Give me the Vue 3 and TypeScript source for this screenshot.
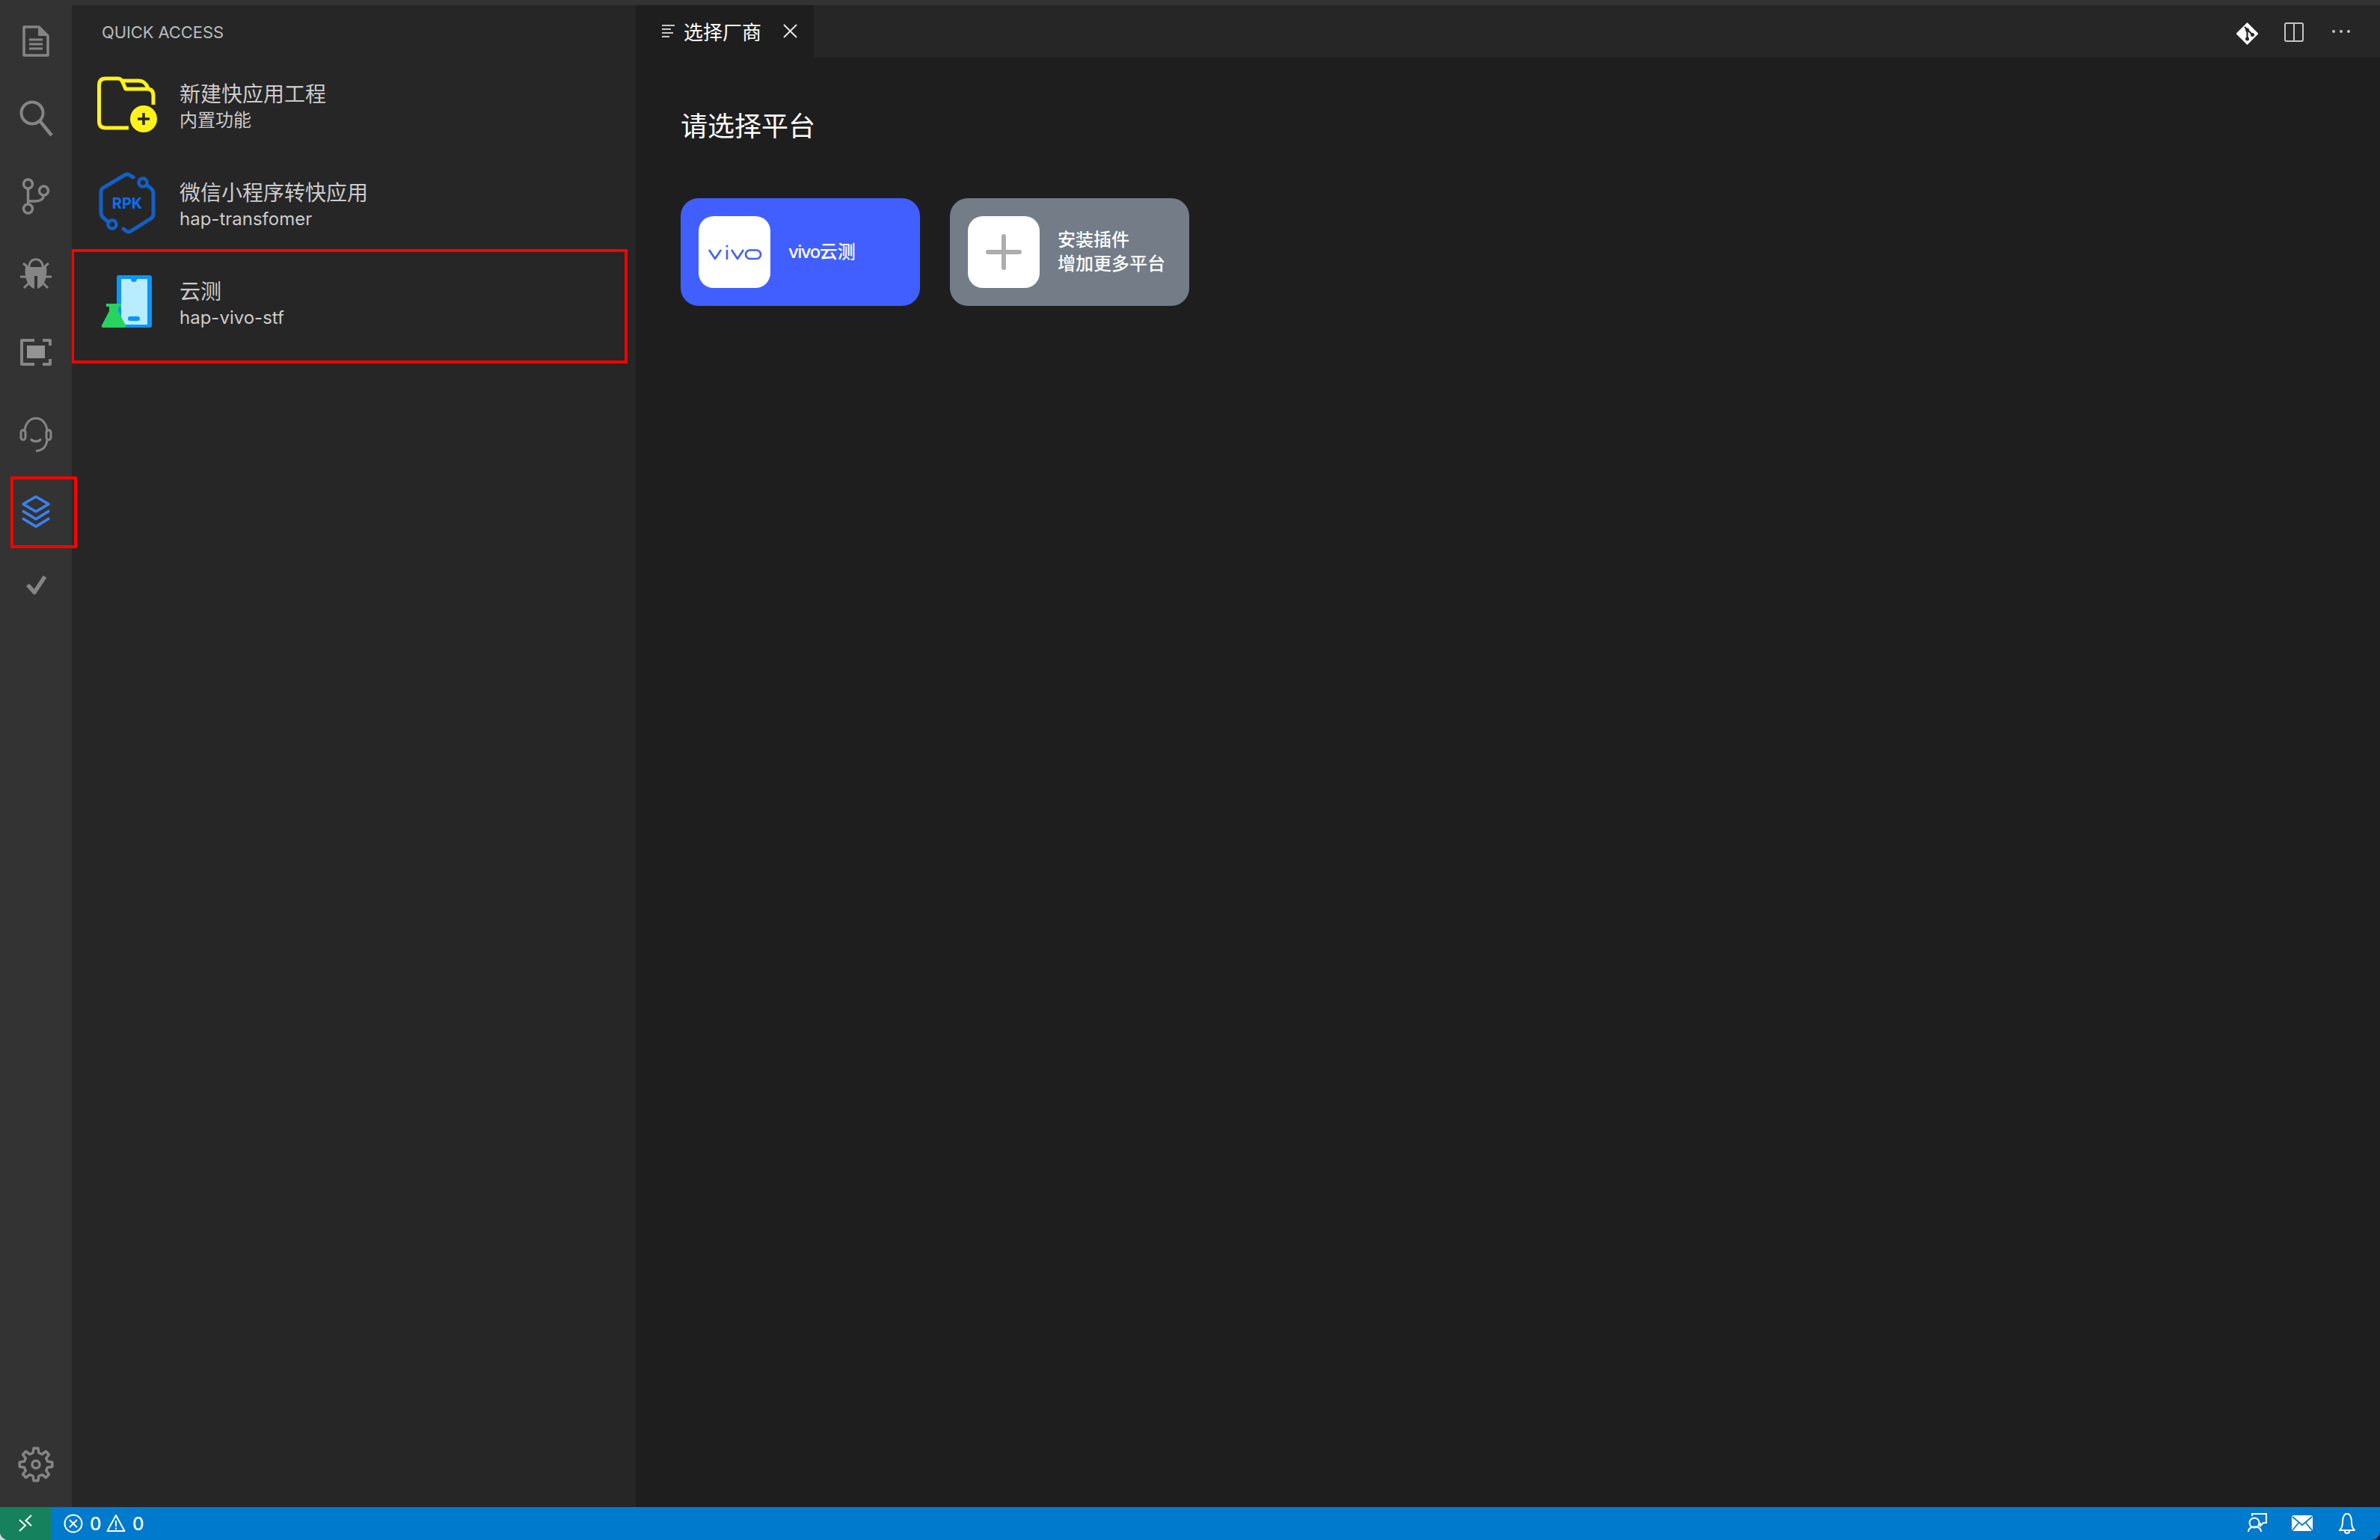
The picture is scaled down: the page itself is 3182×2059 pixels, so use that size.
<script setup lang="ts">
function gearPath(cx: number, cy: number): string {
  const teeth = 8
  const outer = 22
  const inner = 16
  const parts: string[] = []
  for (let i = 0; i < teeth; i++) {
    const a = (i * Math.PI * 2) / teeth - Math.PI / 2
    const step = Math.PI / teeth
    const pts: [number, number][] = [
      [inner, a - step * 0.62],
      [outer, a - step * 0.34],
      [outer, a + step * 0.34],
      [inner, a + step * 0.62],
    ]
    for (const [r, t] of pts) {
      parts.push(`${(cx + r * Math.cos(t)).toFixed(1)} ${(cy + r * Math.sin(t)).toFixed(1)}`)
    }
  }
  return 'M' + parts.join(' L') + ' Z'
}
const gear = gearPath(48, 1958)
</script>

<template>
  <div class="window">
    <div class="titlebar"></div>
    <div class="main">
      <nav class="activity">
        <div class="cell">
          <svg viewBox="0 7 96 104" class="act" fill="none" stroke="#858585" stroke-width="3.5">
            <path d="M32 36 H52 L64 48 V74 H32 Z" stroke-linejoin="round" />
            <path d="M51 35 L65 48 H51 Z" fill="#858585" stroke="none" />
            <path d="M39 53 H57 M39 59 H57 M39 65 H57" stroke-width="3" />
          </svg>
        </div>
        <div class="cell">
          <svg viewBox="0 111 96 104" class="act" fill="none" stroke="#858585" stroke-width="4">
            <circle cx="43" cy="151" r="14.5" />
            <path d="M53.5 162 L69 181" stroke-width="4.5" />
          </svg>
        </div>
        <div class="cell">
          <svg viewBox="0 215 96 104" class="act" fill="none" stroke="#858585" stroke-width="3.5">
            <circle cx="37.5" cy="246" r="6" />
            <circle cx="58.5" cy="255" r="6" />
            <circle cx="37.5" cy="279" r="6" />
            <path d="M37.5 252 V273 M38 269 H48 C54 269 58 266 58.5 261" />
          </svg>
        </div>
        <div class="cell">
          <svg viewBox="0 319 96 104" class="act" fill="none" stroke="#858585" stroke-width="3">
            <path d="M39 358 C38 343 58 343 57 358" />
            <path d="M34 357 H62 C64 372 58 384 50 386 V369 H46 V386 C38 384 32 372 34 357 Z" fill="#858585" stroke="none" />
            <path d="M31 352 L38 358 M65 352 L58 358 M27 370 H35 M69 370 H61 M32 385 L39 378 M64 385 L57 378" />
          </svg>
        </div>
        <div class="cell">
          <svg viewBox="0 423 96 104" class="act" fill="none" stroke="#858585" stroke-width="4">
            <path d="M46 455 H29 V487 H46 M57 455 H67 V462 M67 480 V487 H57" stroke-linejoin="round" />
            <rect x="36" y="462" width="24" height="17" fill="#939393" stroke="none" />
          </svg>
        </div>
        <div class="cell">
          <svg viewBox="0 527 96 104" class="act" fill="none" stroke="#858585" stroke-width="3">
            <path d="M33 578 C33 553 63 553 63 578" />
            <rect x="28" y="575" width="6" height="13" rx="3" />
            <rect x="62" y="575" width="6" height="13" rx="3" />
            <path d="M63 588 C62 598 57 602 48 603" />
            <path d="M41 587 C44 591 52 591 55 587" />
          </svg>
        </div>
        <div class="cell active">
          <svg viewBox="0 631 96 104" class="act" fill="none" stroke="#3a82f7" stroke-width="3.5">
            <path d="M48 664 L65 674 L48 684 L31 674 Z" stroke-linejoin="round" />
            <path d="M30 683 L48 694 L66 683 M30 693 L48 704 L66 693" stroke-linejoin="round" />
          </svg>
        </div>
        <div class="cell">
          <svg viewBox="0 735 96 104" class="act" fill="none" stroke="#858585" stroke-width="5.5">
            <path d="M37 782 L46 792 L60 771" stroke-linejoin="round" />
          </svg>
        </div>
        <div class="spacer"></div>
        <div class="cell gear">
          <svg viewBox="0 1911 96 104" class="act" fill="none" stroke="#858585" stroke-width="3.5">
            <path :d="gear" stroke-linejoin="round" />
            <circle cx="48" cy="1958" r="5" />
          </svg>
        </div>
      </nav>

      <aside class="side">
        <header class="side-head">QUICK ACCESS</header>
        <div class="row">
          <svg viewBox="96 76 144 132" class="row-icon" fill="none">
            <path d="M172 171 H141 Q132.5 171 132.5 162 V114 Q132.5 105 141 105 H158 Q162 105 164 110 L168 119 H197 Q205 119 205 128 V140" stroke="#fff21a" stroke-width="5" stroke-linejoin="round" />
            <path d="M163 108 H186 Q194 108 198 118" stroke="#fff21a" stroke-width="5" />
            <circle cx="192" cy="159" r="18" fill="#fff21a" />
            <path d="M192 151 V167 M184 159 H200" stroke="#262626" stroke-width="3.5" />
          </svg>
          <div class="row-text">
            <div class="row-title">新建快应用工程</div>
            <div class="row-sub">内置功能</div>
          </div>
        </div>
        <div class="row">
          <svg viewBox="96 208 144 132" class="row-icon" fill="none">
            <path d="M178 237 L173 234 Q170 232 167 234 L138 251 Q135 253 135 256 V284 Q135 288 138 291 L144 296" stroke="#1260c8" stroke-width="5" stroke-linecap="round" />
            <path d="M165 306 L169 309 Q172 311 175 309 L202 292 Q205 290 205 286 V258 Q205 255 202 252 L197 248" stroke="#1260c8" stroke-width="5" stroke-linecap="round" />
            <circle cx="191" cy="244" r="5.5" stroke="#1260c8" stroke-width="4.5" />
            <circle cx="150" cy="300" r="5.5" stroke="#1260c8" stroke-width="4.5" />
            <text x="170" y="279" text-anchor="middle" class="rpk">RPK</text>
          </svg>
          <div class="row-text">
            <div class="row-title">微信小程序转快应用</div>
            <div class="row-sub">hap-transfomer</div>
          </div>
        </div>
        <div class="row flagged">
          <svg viewBox="96 340 144 132" class="row-icon" fill="none">
            <rect x="156" y="368" width="47" height="70" rx="3" fill="#0a96ff" />
            <path d="M162 373 H175 A4 4 0 0 0 183 373 H197 V434 H162 Z" fill="#b8ecff" />
            <rect x="171" y="423" width="16" height="6" rx="3" fill="#0a96ff" />
            <path d="M142 406 H162 V410 H158 V416 L168 435 Q169 438 166 438 H138 Q135 438 136 435 L146 416 V410 H142 Z" fill="#27d35f" />
          </svg>
          <div class="row-text">
            <div class="row-title">云测</div>
            <div class="row-sub">hap-vivo-stf</div>
          </div>
        </div>
      </aside>

      <section class="editor">
        <div class="tabs">
          <div class="tab">
            <svg viewBox="885 35 18 18" class="tab-icon" fill="none" stroke="#c8c8c8" stroke-width="2">
              <path d="M885 36 H902 M885 41 H897 M885 46 H900 M885 51 H895" />
            </svg>
            <span class="tab-title">选择厂商</span>
            <svg viewBox="1047 34 19 19" class="tab-close" fill="none" stroke="#e6e6e6" stroke-width="2">
              <path d="M1048 35 L1065 52 M1065 35 L1048 52" />
            </svg>
          </div>
          <div class="tab-actions">
            <svg viewBox="2990 30 29 30" class="git" fill="none">
              <path d="M3004.5 31 L3018.5 45 L3004.5 59 L2990.5 45 Z" fill="#fff" stroke="#fff" stroke-width="1.5" stroke-linejoin="round" />
              <path d="M3001 36 L3012 47 M3004.5 40 V52" stroke="#262626" stroke-width="2.2" />
              <circle cx="3004.5" cy="40" r="2.5" fill="#262626" />
              <circle cx="3004.5" cy="52" r="2.5" fill="#262626" />
              <circle cx="3011.5" cy="46.5" r="2.5" fill="#262626" />
            </svg>
            <svg viewBox="3054 29 26 26" class="split" fill="none" stroke="#c5c5c5" stroke-width="2">
              <rect x="3055" y="30" width="24" height="24" rx="2" />
              <path d="M3067 30 V54" />
            </svg>
            <svg viewBox="3116 39 28 8" class="dots" fill="#c5c5c5">
              <circle cx="3120" cy="43" r="2" />
              <circle cx="3130" cy="43" r="2" />
              <circle cx="3140" cy="43" r="2" />
            </svg>
          </div>
        </div>
        <div class="content">
          <h1 class="heading">请选择平台</h1>
          <div class="cards">
            <div class="card vivo">
              <div class="card-icon">
                <svg viewBox="944 324 76 26" class="vivo-logo" fill="none" stroke="#415fff" stroke-width="2.6">
                  <path d="M948 334 L956 346 L964 334" stroke-linejoin="round" />
                  <path d="M972 334 V347" />
                  <circle cx="972" cy="329" r="1.6" fill="#415fff" stroke="none" />
                  <path d="M978 334 L986 346 L994 334" stroke-linejoin="round" />
                  <rect x="997" y="334.5" width="20" height="11.5" rx="5.7" />
                </svg>
              </div>
              <div class="card-text"><span class="latin">vivo</span>云测</div>
            </div>
            <div class="card plugin">
              <div class="card-icon">
                <svg viewBox="1318 313 48 48" class="plus" fill="none" stroke="#adadad" stroke-width="6" stroke-linecap="round">
                  <path d="M1342 316 V358 M1321 337 H1363" />
                </svg>
              </div>
              <div class="card-text">安装插件<br />增加更多平台</div>
            </div>
          </div>
        </div>
      </section>
    </div>

    <footer class="status">
      <div class="remote">
        <svg viewBox="24 2024 20 26" class="remote-icon" fill="none" stroke="#fff" stroke-width="2">
          <path d="M26 2032 L34 2039.5 L26 2047 M42 2026 L34.5 2033 L42 2040" />
        </svg>
      </div>
      <div class="problems">
        <svg viewBox="85 2024 26 26" class="st-icon" fill="none" stroke="#fff" stroke-width="2">
          <circle cx="98" cy="2037" r="11.5" />
          <path d="M93 2032 L103 2042 M103 2032 L93 2042" />
        </svg>
        <span class="count">0</span>
        <svg viewBox="142 2024 26 26" class="st-icon warn" fill="none" stroke="#fff" stroke-width="2">
          <path d="M155 2026 L166.5 2047 H143.5 Z" stroke-linejoin="round" />
          <path d="M155 2033 V2041 M155 2042.5 V2045" />
        </svg>
        <span class="count">0</span>
      </div>
      <div class="status-right">
        <svg viewBox="3004 2023 30 30" class="st-account" fill="none" stroke="#fff" stroke-width="2">
          <circle cx="3014" cy="2037" r="6.5" />
          <path d="M3006 2049 C3006 2040 3023 2040 3023 2049" />
          <path d="M3011 2028 V2025 H3030 V2037 H3026 L3022 2041 V2037" />
        </svg>
        <svg viewBox="3064 2026 28 22" class="st-mail">
          <rect x="3064" y="2026" width="28" height="21" rx="3" fill="#fff" />
          <path d="M3065 2028 L3078 2039 L3091 2028 M3065 2046 L3073 2036 M3091 2046 L3083 2036" fill="none" stroke="#007acc" stroke-width="1.8" />
        </svg>
        <svg viewBox="3127 2024 22 28" class="st-bell" fill="none" stroke="#fff" stroke-width="2">
          <path d="M3128 2047 Q3132 2043 3132 2036 C3132 2021 3144 2021 3144 2036 Q3144 2043 3148 2047 Z" stroke-linejoin="round" />
          <path d="M3135 2048 C3135 2052 3141 2052 3141 2048" />
        </svg>
      </div>
    </footer>
  </div>
</template>

<style>
html,
body {
  margin: 0;
}
html {
  background: linear-gradient(to right, #d8d8d8 50%, #222 50%);
}
</style>

<style scoped>
.window {
  width: 3182px;
  height: 2059px;
  display: flex;
  flex-direction: column;
  overflow: hidden;
  border-radius: 0 0 12px 12px;
  font-family: Inter, "Noto Sans CJK SC", sans-serif;
  background: #1e1e1e;
}
.titlebar {
  height: 7px;
  flex: none;
  background: #333;
}
.main {
  flex: 1;
  display: flex;
  min-height: 0;
}
.activity {
  width: 96px;
  flex: none;
  display: flex;
  flex-direction: column;
  background: #333;
  position: relative;
  z-index: 2;
}
.cell {
  height: 104px;
  flex: none;
  position: relative;
}
.act {
  display: block;
  width: 96px;
  height: 104px;
}
.active::after {
  content: "";
  position: absolute;
  left: 14px;
  top: 6px;
  width: 89px;
  height: 96px;
  box-sizing: border-box;
  border: 4px solid #f00;
}
.spacer {
  flex: 1;
}
.side {
  width: 754px;
  flex: none;
  background: #262626;
  color: #ccc;
}
.side-head {
  height: 69px;
  box-sizing: border-box;
  padding: 3px 0 0 40px;
  display: flex;
  align-items: center;
  font-size: 22px;
  letter-spacing: -0.1px;
  color: #bbb;
}
.row {
  height: 132px;
  display: flex;
  align-items: center;
  position: relative;
}
.flagged::after {
  content: "";
  position: absolute;
  left: -1px;
  top: -7px;
  width: 744px;
  height: 153px;
  box-sizing: border-box;
  border: 4px solid #f00;
}
.row-icon {
  display: block;
  width: 144px;
  height: 132px;
  flex: none;
}
.row-text {
  margin-top: 2px;
}
.rpk {
  font-size: 20px;
  font-weight: 700;
  fill: #0a6ff0;
  font-family: Inter, sans-serif;
}
.row-title {
  font-size: 28px;
  line-height: 36px;
  color: #ccc;
}
.row-sub {
  font-size: 24px;
  line-height: 34px;
  color: #ccc;
}
.editor {
  flex: 1;
  min-width: 0;
  display: flex;
  flex-direction: column;
  background: #1e1e1e;
}
.tabs {
  height: 70px;
  flex: none;
  display: flex;
  background: #262626;
}
.tab {
  width: 238px;
  display: flex;
  align-items: center;
  background: #1e1e1e;
  padding-left: 35px;
  box-sizing: border-box;
  padding-bottom: 1px;
}
.tab-icon {
  width: 18px;
  height: 18px;
  flex: none;
}
.tab-title {
  margin-left: 11px;
  font-size: 26px;
  color: #fff;
  width: 104px;
  white-space: nowrap;
}
.tab-close {
  width: 19px;
  height: 19px;
  margin-left: 29px;
  flex: none;
}
.tab-actions {
  margin-left: auto;
  display: flex;
  align-items: center;
  gap: 36px;
  padding-right: 38px;
}
.git {
  width: 29px;
  height: 30px;
  margin-top: 6px;
  margin-right: -1px;
}
.split {
  width: 26px;
  height: 26px;
  margin-top: 2px;
}
.dots {
  width: 28px;
  height: 8px;
}
.content {
  padding: 67px 0 0 60px;
}
.heading {
  margin: 0 0 71px;
  font-size: 36px;
  line-height: 50px;
  font-weight: 400;
  color: #fff;
}
.cards {
  display: flex;
  gap: 40px;
}
.card {
  width: 320px;
  height: 144px;
  box-sizing: border-box;
  padding: 24px;
  display: flex;
  align-items: center;
  gap: 24px;
  border-radius: 24px;
  color: #fff;
  font-size: 24px;
  line-height: 32px;
  font-weight: 500;
}
.latin {
  letter-spacing: -1.5px;
}
.vivo {
  background: #415fff;
}
.plugin {
  background: #737c87;
}
.card-icon {
  width: 96px;
  height: 96px;
  flex: none;
  background: #fff;
  border-radius: 20px;
  display: flex;
  align-items: center;
  justify-content: center;
}
.vivo-logo {
  width: 76px;
  height: 26px;
}
.plus {
  width: 48px;
  height: 48px;
}
.status {
  height: 44px;
  flex: none;
  display: flex;
  align-items: center;
  background: #007acc;
  color: #fff;
}
.remote {
  width: 68px;
  height: 44px;
  flex: none;
  background: #16825d;
  display: flex;
  align-items: center;
  justify-content: center;
}
.remote-icon {
  width: 20px;
  height: 26px;
}
.problems {
  display: flex;
  align-items: center;
  padding-left: 17px;
  font-size: 24px;
  font-weight: 500;
}
.st-icon {
  width: 26px;
  height: 26px;
  flex: none;
}
.count {
  margin-left: 9px;
  width: 15px;
}
.warn {
  margin-left: 7px;
}
.status-right {
  margin-left: auto;
  display: flex;
  align-items: center;
  padding-right: 33px;
}
.st-account {
  width: 30px;
  height: 30px;
  margin-right: 30px;
}
.st-mail {
  width: 28px;
  height: 22px;
  margin-right: 35px;
}
.st-bell {
  width: 22px;
  height: 28px;
}
</style>
